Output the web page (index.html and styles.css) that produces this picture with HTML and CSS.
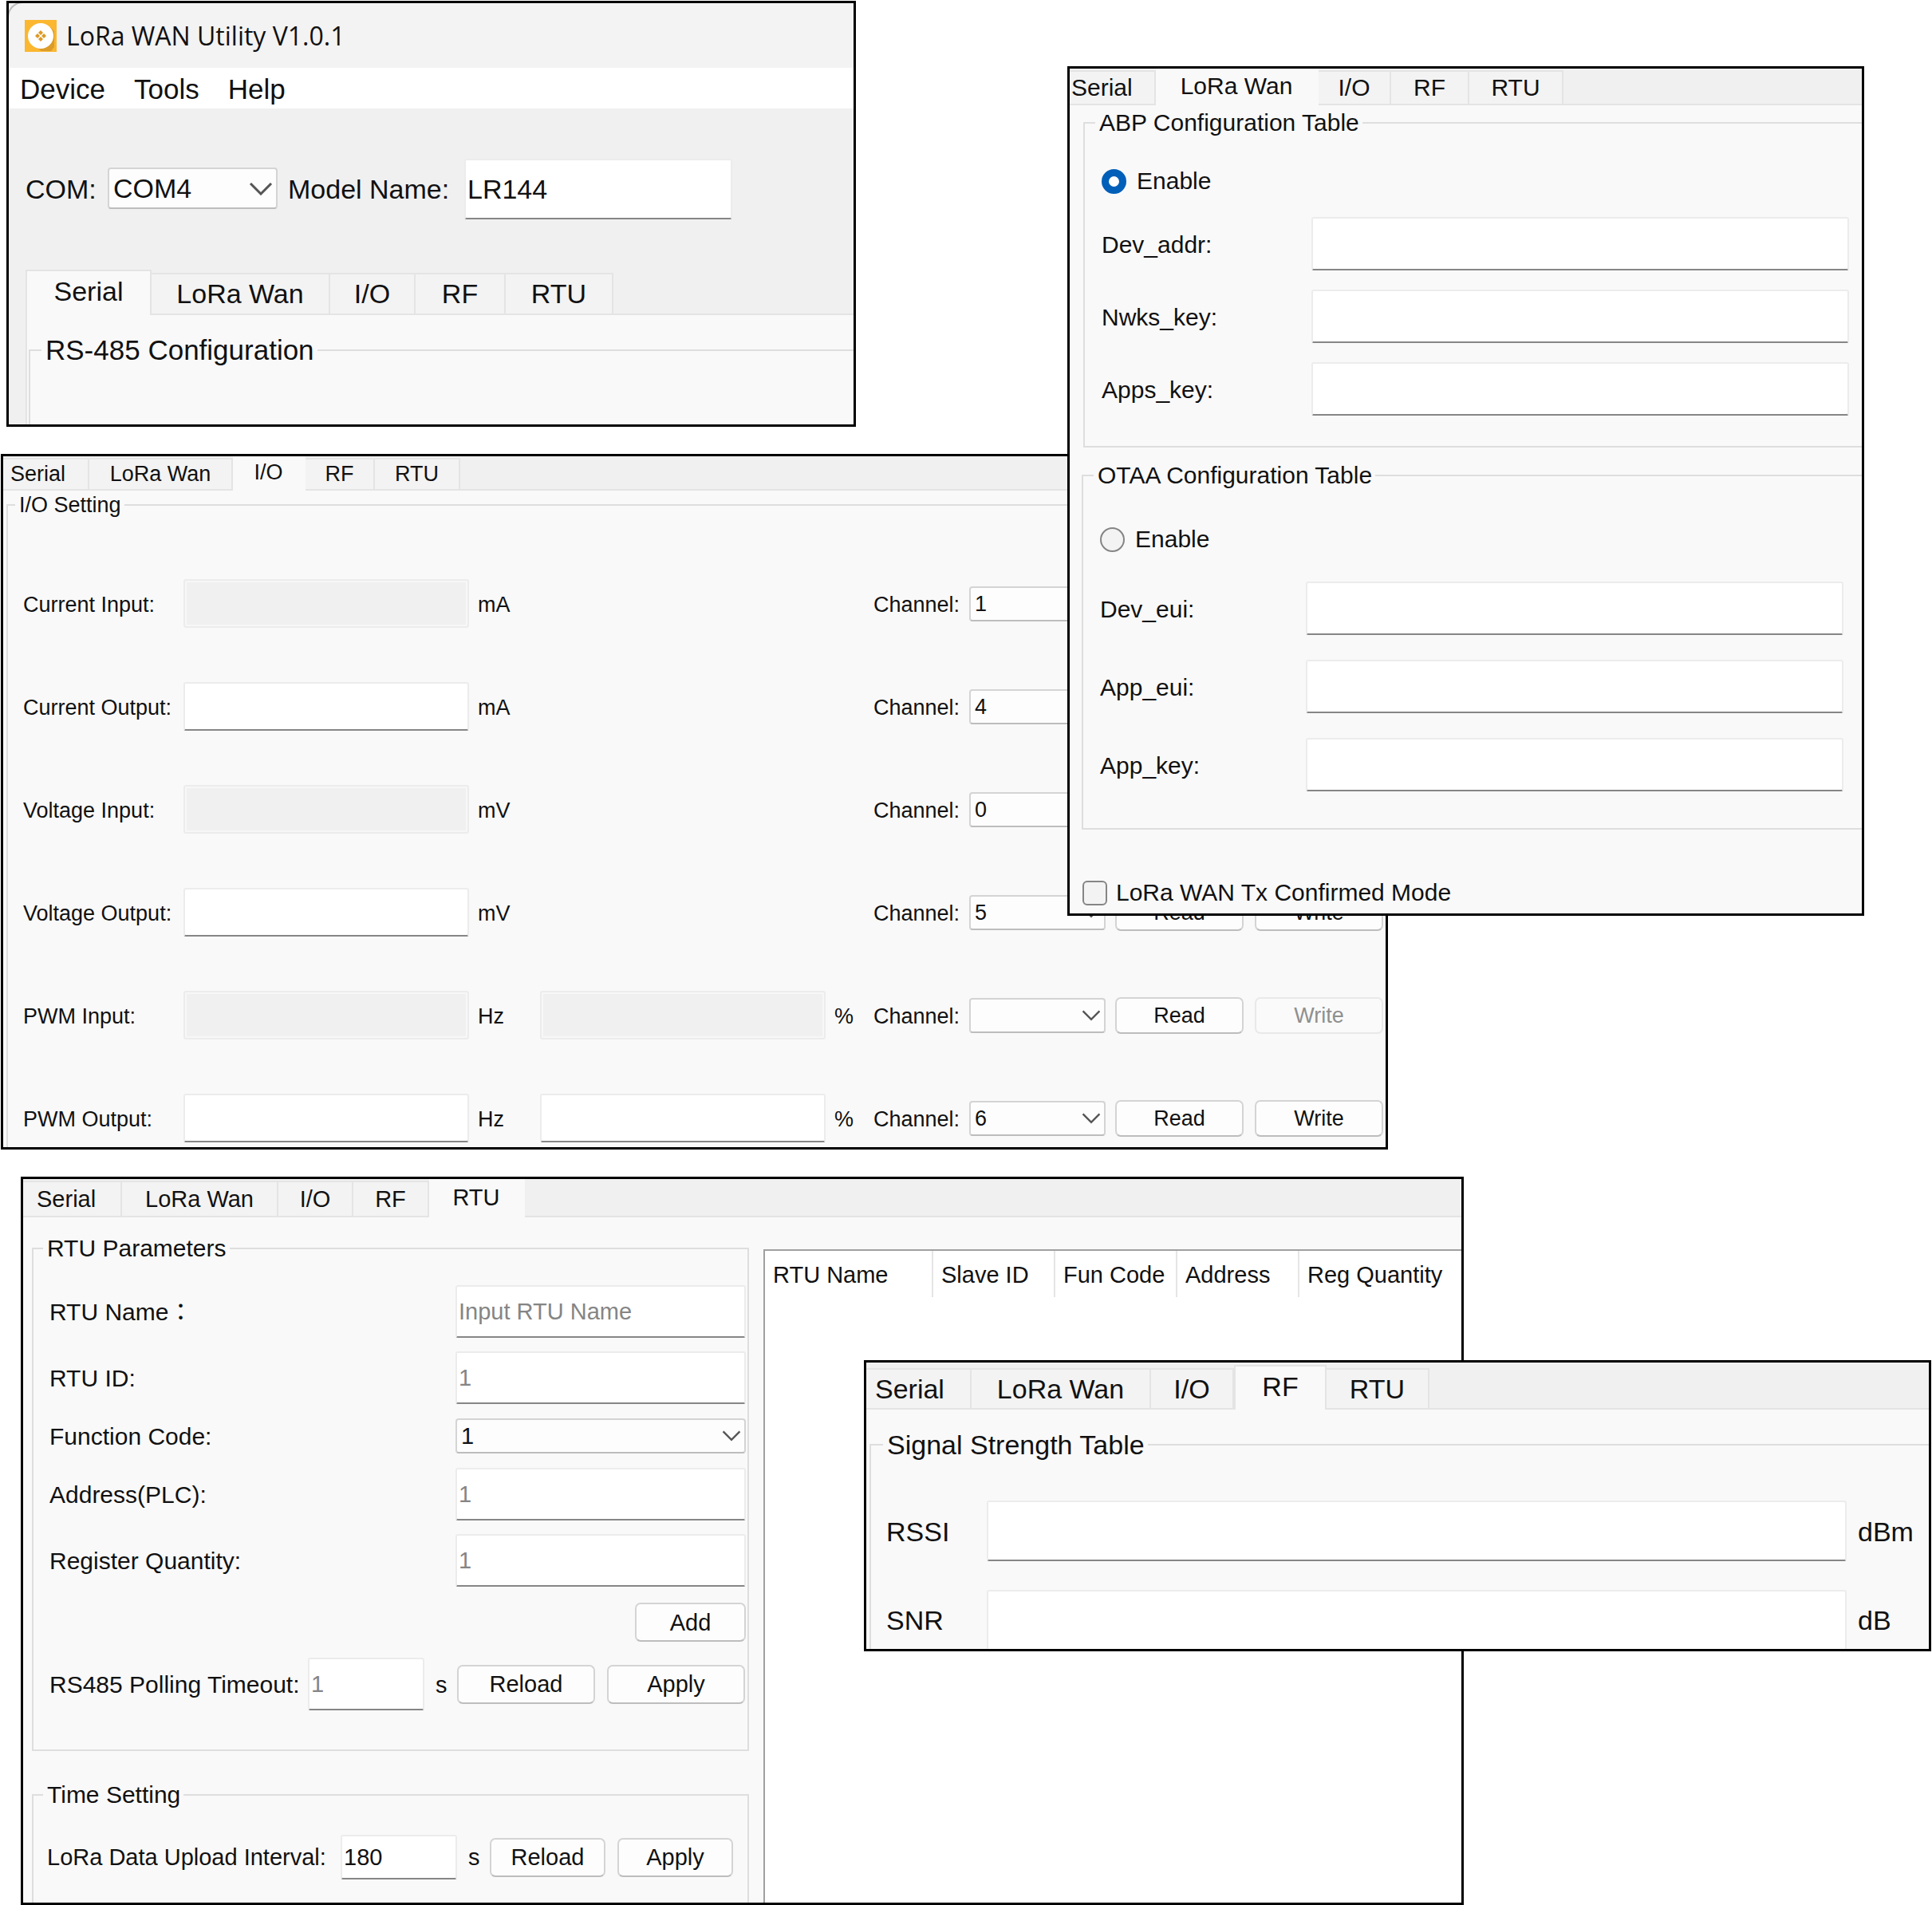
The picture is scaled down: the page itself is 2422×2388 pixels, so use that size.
FILE: index.html
```html
<!DOCTYPE html>
<html lang="en">
<head>
<meta charset="utf-8">
<title>LoRa WAN Utility V1.0.1</title>
<link rel="stylesheet" href="styles.css">
</head>
<body>
<main class="desktop">

  <section class="window window-main">
    <header class="titlebar">
      <svg class="app-icon" viewBox="0 0 40 40" aria-hidden="true">
        <rect width="40" height="40" fill="#fbb72f"/>
        <path d="M32 9 37 14V34L33 39H21L9 31Z" fill="#dc9c2a"/>
        <circle cx="20" cy="20" r="16" fill="#fff"/>
        <g fill="#dd9a26">
          <path d="M20 13l3 3-3 3-3-3z"/>
          <path d="M20 21l3 3-3 3-3-3z"/>
          <path d="M16 17l3 3-3 3-3-3z"/>
          <path d="M24 17l3 3-3 3-3-3z"/>
        </g>
      </svg>
      <h1 class="title">LoRa WAN Utility V1.0.1</h1>
    </header>
    <nav class="menubar">
      <button class="menu" type="button">Device</button>
      <button class="menu" type="button">Tools</button>
      <button class="menu" type="button">Help</button>
    </nav>
    <div class="toolbar">
      <label for="com">COM:</label>
      <span class="combo">
        <select id="com"><option>COM4</option></select>
        <svg class="chevron" viewBox="0 0 30 16" aria-hidden="true"><path d="M2 1l13 13L28 1"/></svg>
      </span>
      <label for="model">Model Name:</label>
      <input class="field" id="model" type="text" value="LR144">
    </div>
    <div class="tabs" role="tablist">
      <button class="tab active" role="tab" aria-selected="true" type="button">Serial</button>
      <button class="tab" role="tab" type="button">LoRa Wan</button>
      <button class="tab" role="tab" type="button">I/O</button>
      <button class="tab" role="tab" type="button">RF</button>
      <button class="tab" role="tab" type="button">RTU</button>
      <span class="tab-rest"></span>
    </div>
    <div class="pane">
      <fieldset class="group">
        <legend>RS-485 Configuration</legend>
      </fieldset>
    </div>
  </section>

  <section class="window window-io">
    <div class="tabs" role="tablist">
      <button class="tab cut" role="tab" type="button">Serial</button>
      <button class="tab" role="tab" type="button">LoRa Wan</button>
      <button class="tab active" role="tab" aria-selected="true" type="button">I/O</button>
      <button class="tab" role="tab" type="button">RF</button>
      <button class="tab" role="tab" type="button">RTU</button>
      <span class="tab-rest"></span>
    </div>
    <fieldset class="group">
      <legend>I/O Setting</legend>
      <div class="rows">
        <div class="io-row">
          <label for="cur-in">Current Input:</label>
          <input class="field" id="cur-in" type="text" disabled>
          <span class="unit">mA</span>
          <label class="channel" for="ch1">Channel:</label>
          <span class="combo">
            <select id="ch1"><option>1</option></select>
            <svg class="chevron" viewBox="0 0 30 16" aria-hidden="true"><path d="M2 1l13 13L28 1"/></svg>
          </span>
        </div>
        <div class="io-row">
          <label for="cur-out">Current Output:</label>
          <input class="field" id="cur-out" type="text">
          <span class="unit">mA</span>
          <label class="channel" for="ch2">Channel:</label>
          <span class="combo">
            <select id="ch2"><option>4</option></select>
            <svg class="chevron" viewBox="0 0 30 16" aria-hidden="true"><path d="M2 1l13 13L28 1"/></svg>
          </span>
        </div>
        <div class="io-row">
          <label for="vol-in">Voltage Input:</label>
          <input class="field" id="vol-in" type="text" disabled>
          <span class="unit">mV</span>
          <label class="channel" for="ch3">Channel:</label>
          <span class="combo">
            <select id="ch3"><option>0</option></select>
            <svg class="chevron" viewBox="0 0 30 16" aria-hidden="true"><path d="M2 1l13 13L28 1"/></svg>
          </span>
        </div>
        <div class="io-row">
          <label for="vol-out">Voltage Output:</label>
          <input class="field" id="vol-out" type="text">
          <span class="unit">mV</span>
          <label class="channel" for="ch4">Channel:</label>
          <span class="combo">
            <select id="ch4"><option>5</option></select>
            <svg class="chevron" viewBox="0 0 30 16" aria-hidden="true"><path d="M2 1l13 13L28 1"/></svg>
          </span>
          <button class="button" type="button">Read</button>
          <button class="button" type="button">Write</button>
        </div>
        <div class="io-row">
          <label for="pwm-in">PWM Input:</label>
          <input class="field" id="pwm-in" type="text" disabled>
          <span class="unit">Hz</span>
          <input class="field" type="text" aria-label="PWM input duty" disabled>
          <span class="unit">%</span>
          <label class="channel" for="ch5">Channel:</label>
          <span class="combo">
            <select id="ch5"><option></option></select>
            <svg class="chevron" viewBox="0 0 30 16" aria-hidden="true"><path d="M2 1l13 13L28 1"/></svg>
          </span>
          <button class="button" type="button">Read</button>
          <button class="button" type="button" disabled>Write</button>
        </div>
        <div class="io-row">
          <label for="pwm-out">PWM Output:</label>
          <input class="field" id="pwm-out" type="text">
          <span class="unit">Hz</span>
          <input class="field" type="text" aria-label="PWM output duty">
          <span class="unit">%</span>
          <label class="channel" for="ch6">Channel:</label>
          <span class="combo">
            <select id="ch6"><option>6</option></select>
            <svg class="chevron" viewBox="0 0 30 16" aria-hidden="true"><path d="M2 1l13 13L28 1"/></svg>
          </span>
          <button class="button" type="button">Read</button>
          <button class="button" type="button">Write</button>
        </div>
      </div>
    </fieldset>
  </section>

  <section class="window window-lora">
    <div class="tabs" role="tablist">
      <button class="tab cut" role="tab" type="button">Serial</button>
      <button class="tab active" role="tab" aria-selected="true" type="button">LoRa Wan</button>
      <button class="tab" role="tab" type="button">I/O</button>
      <button class="tab" role="tab" type="button">RF</button>
      <button class="tab" role="tab" type="button">RTU</button>
      <span class="tab-rest"></span>
    </div>
    <fieldset class="group abp">
      <legend>ABP Configuration Table</legend>
      <label class="choice"><input type="radio" name="activation" checked>Enable</label>
      <div class="rows">
        <div class="key-row"><label for="dev-addr">Dev_addr:</label><input class="field" id="dev-addr" type="text"></div>
        <div class="key-row"><label for="nwks-key">Nwks_key:</label><input class="field" id="nwks-key" type="text"></div>
        <div class="key-row"><label for="apps-key">Apps_key:</label><input class="field" id="apps-key" type="text"></div>
      </div>
    </fieldset>
    <fieldset class="group otaa">
      <legend>OTAA Configuration Table</legend>
      <label class="choice"><input type="radio" name="activation">Enable</label>
      <div class="rows">
        <div class="key-row"><label for="dev-eui">Dev_eui:</label><input class="field" id="dev-eui" type="text"></div>
        <div class="key-row"><label for="app-eui">App_eui:</label><input class="field" id="app-eui" type="text"></div>
        <div class="key-row"><label for="app-key">App_key:</label><input class="field" id="app-key" type="text"></div>
      </div>
    </fieldset>
    <label class="choice confirm"><input type="checkbox">LoRa WAN Tx Confirmed Mode</label>
  </section>

  <section class="window window-rtu">
    <div class="tabs" role="tablist">
      <button class="tab cut" role="tab" type="button">Serial</button>
      <button class="tab" role="tab" type="button">LoRa Wan</button>
      <button class="tab" role="tab" type="button">I/O</button>
      <button class="tab" role="tab" type="button">RF</button>
      <button class="tab active" role="tab" aria-selected="true" type="button">RTU</button>
      <span class="tab-rest"></span>
    </div>
    <div class="split">
      <div class="forms">
        <fieldset class="group params">
          <legend>RTU Parameters</legend>
          <div class="rows">
            <div class="form-row"><label for="rtu-name">RTU Name：</label><input class="field" id="rtu-name" type="text" placeholder="Input RTU Name"></div>
            <div class="form-row"><label for="rtu-id">RTU ID:</label><input class="field" id="rtu-id" type="text" placeholder="1"></div>
            <div class="form-row short">
              <label for="fun-code">Function Code:</label>
              <span class="combo">
                <select id="fun-code"><option>1</option></select>
                <svg class="chevron" viewBox="0 0 30 16" aria-hidden="true"><path d="M2 1l13 13L28 1"/></svg>
              </span>
            </div>
            <div class="form-row"><label for="address">Address(PLC):</label><input class="field" id="address" type="text" placeholder="1"></div>
            <div class="form-row"><label for="quantity">Register Quantity:</label><input class="field" id="quantity" type="text" placeholder="1"></div>
            <div class="add-row"><button class="button" type="button">Add</button></div>
            <div class="timing-row polling">
              <label for="polling">RS485 Polling Timeout:</label>
              <input class="field" id="polling" type="text" placeholder="1">
              <span class="unit">s</span>
              <button class="button" type="button">Reload</button>
              <button class="button" type="button">Apply</button>
            </div>
          </div>
        </fieldset>
        <fieldset class="group timing">
          <legend>Time Setting</legend>
          <div class="timing-row upload">
            <label for="interval">LoRa Data Upload Interval:</label>
            <input class="field" id="interval" type="text" value="180">
            <span class="unit">s</span>
            <button class="button" type="button">Reload</button>
            <button class="button" type="button">Apply</button>
          </div>
        </fieldset>
      </div>
      <div class="list">
        <table>
          <colgroup><col class="col-name"><col class="col-mid"><col class="col-mid"><col class="col-mid"><col></colgroup>
          <thead>
            <tr><th scope="col">RTU Name</th><th scope="col">Slave ID</th><th scope="col">Fun Code</th><th scope="col">Address</th><th scope="col">Reg Quantity</th></tr>
          </thead>
          <tbody></tbody>
        </table>
      </div>
    </div>
  </section>

  <section class="window window-rf">
    <div class="tabs" role="tablist">
      <button class="tab cut" role="tab" type="button">Serial</button>
      <button class="tab" role="tab" type="button">LoRa Wan</button>
      <button class="tab" role="tab" type="button">I/O</button>
      <button class="tab active" role="tab" aria-selected="true" type="button">RF</button>
      <button class="tab" role="tab" type="button">RTU</button>
      <span class="tab-rest"></span>
    </div>
    <fieldset class="group">
      <legend>Signal Strength Table</legend>
      <div class="rows">
        <div class="signal-row"><label for="rssi">RSSI</label><input class="field" id="rssi" type="text"><span class="unit">dBm</span></div>
        <div class="signal-row"><label for="snr">SNR</label><input class="field open" id="snr" type="text"><span class="unit">dB</span></div>
      </div>
    </fieldset>
  </section>

</main>
</body>
</html>
```
FILE: styles.css
```css
:root {
  --page: #f9f9f9;
  --chrome: #f0f0f0;
  --tab: #f3f3f3;
  --line: #e4e4e4;
  --text: #111;
}

* { box-sizing: border-box; }

body {
  margin: 0;
  background: #fff;
  color: var(--text);
  font-family: "Liberation Sans", Arial, "Noto Sans CJK TC", sans-serif;
}

button, input, select {
  margin: 0;
  font: inherit;
  color: inherit;
}

/* Desktop and its freely placed windows */
.desktop {
  position: relative;
  min-height: 100vh;
  overflow: hidden;
}

.window {
  position: absolute;
  border: 3px solid #000;
  background: var(--page);
  line-height: 36px;
  overflow: hidden;
}

.window-main { left: 8px; right: 1349px; top: 1px; font-size: 34px; background: var(--chrome); }
.window-io   { left: 1px; right: 682px; top: 569px; font-size: 27px; }
.window-lora { left: 1338px; right: 85px; top: 83px; font-size: 30px; }
.window-rtu  { left: 26px; right: 587px; top: 1475px; font-size: 29px; }
.window-rf   { left: 1083px; right: 1px; top: 1705px; font-size: 34px; }

/* Tabs */
.tabs {
  display: grid;
  background: var(--chrome);
}

.tab, .tab-rest {
  border: 0 solid var(--line);
  border-bottom-width: 2px;
}

.tab {
  margin-top: 2px;
  padding: 0 0 1px;
  border-top-width: 2px;
  border-right-width: 2px;
  background: var(--tab);
  text-align: center;
  white-space: nowrap;
}

.tab.active {
  margin-top: 0;
  padding-bottom: 3px;
  border-color: var(--page);
  background: var(--page);
}

.tab.cut { text-align: left; }

.window-main .tabs {
  height: 57px;
  margin-left: 21px;
  grid-template-columns: 158px 224px 107px 113px 135px 1fr;
}
.window-io .tabs { height: 43px; grid-template-columns: 108px 180px 91px 87px 107px 1fr; }
.window-lora .tabs { height: 46px; grid-template-columns: 108px 204px 91px 98px 118px 1fr; }
.window-rtu .tabs { height: 48px; grid-template-columns: 124px 196px 94px 95px 120px 1fr; }
.window-rf .tabs { height: 59px; padding-top: 3px; grid-template-columns: 132px 225px 104px 116px 129px 1fr; }

.window-main .tab, .window-rf .tab { margin-top: 4px; }
.window-main .tab.active, .window-rf .tab.active {
  margin-top: 0;
  border-width: 2px 2px 0 2px;
  border-color: var(--line);
  padding-bottom: 5px;
}

.window-io .cut { padding-left: 9px; }
.window-lora .cut { padding-left: 2px; }
.window-rtu .cut { padding-left: 17px; }
.window-rf .cut { padding-left: 11px; }

/* Group boxes */
.group {
  min-width: 0;
  margin: 0;
  padding: 0;
  border: 2px solid #dedede;
  border-right: 0;
}

legend { padding: 0 4px 0 5px; }

.rows { display: grid; }

.rows label, .rows .unit { padding-top: 2px; }

/* Controls */
.field {
  width: 100%;
  min-width: 0;
  padding: 0 2px;
  border: 2px solid #ececec;
  border-bottom-color: #868686;
  border-radius: 3px;
  background: #fff;
}

.field::placeholder { color: #858585; opacity: 1; }

.field:disabled {
  border-color: #ececec;
  background: #f0f0f0;
  box-shadow: inset 0 0 0 2px #f7f7f7;
}

.field.open { border-bottom: 0; border-radius: 3px 3px 0 0; }

.combo { position: relative; display: block; }

.combo select {
  display: block;
  width: 100%;
  height: 100%;
  padding: 0 5px;
  appearance: none;
  border: 2px solid #d4d4d4;
  border-bottom-color: #bdbdbd;
  border-radius: 4px;
  background: #fdfdfd;
  opacity: 1;
}

.chevron {
  position: absolute;
  top: 50%;
  right: 6px;
  width: 24px;
  height: 14px;
  margin-top: -7px;
  fill: none;
  stroke: #555;
  stroke-width: 3;
  pointer-events: none;
}

.button {
  padding: 0;
  border: 2px solid #d4d4d4;
  border-bottom-color: #bdbdbd;
  border-radius: 7px;
  background: #fdfdfd;
  text-align: center;
}

.button:disabled {
  border-color: #e9e9e9;
  background: #fafafa;
  color: #8f8f8f;
}

.choice {
  display: flex;
  align-items: center;
  gap: 13px;
}

.choice input {
  flex: none;
  width: 31px;
  height: 31px;
  appearance: none;
  border: 2px solid #858585;
  background: #f3f3f3;
}

.choice input[type="radio"] { border-radius: 50%; }
.choice input[type="checkbox"] { border-radius: 6px; }
.choice input[type="radio"]:checked { border: 9px solid #005fb8; background: #fff; }

/* Main window */
.titlebar {
  display: flex;
  align-items: center;
  gap: 12px;
  height: 81px;
  padding-left: 20px;
  border-top-left-radius: 18px;
  background: #f3f3f3;
  box-shadow: 0 0 0 2px #bbb;
}

.app-icon { width: 40px; height: 40px; }

.title {
  margin: 0;
  font: 400 32px/40px "Open Sans", "Noto Sans", sans-serif;
}

.menubar {
  display: flex;
  align-items: center;
  gap: 36px;
  height: 51px;
  padding: 2px 0 0 14px;
  background: #fff;
  font-size: 35px;
}

.menu { padding: 0; border: 0; background: none; }

.toolbar {
  display: grid;
  grid-template-columns: 103px 226px 221px 336px;
  align-items: center;
  padding: 63px 0 63px 21px;
}

.toolbar .field { height: 76px; }
.toolbar .combo { width: 213px; height: 52px; margin-bottom: 3px; }
.toolbar .chevron { width: 30px; height: 16px; }

.pane {
  margin-left: 21px;
  padding: 26px 0 0 2px;
  border-left: 2px solid var(--line);
  background: var(--page);
}

.window-main .group {
  height: 111px;
  padding-left: 14px;
  border-bottom: 0;
  font-size: 35px;
}

/* I/O window */
.window-io .group {
  margin-left: 4px;
  padding-left: 9px;
  border-bottom: 0;
}

.window-io .rows {
  gap: 68px;
  padding: 75px 0 6px 10px;
}

.io-row {
  display: grid;
  grid-template-columns: 201px 1fr 89px 1fr 60px 120px 183px 175px 164px;
  align-items: center;
}

.io-row .field { height: 61px; }
.io-row .unit { padding-left: 11px; }
.io-row .channel { grid-column: 6; }
.io-row .combo { width: 171px; height: 44px; }
.io-row .button { width: 161px; height: 46px; }

/* LoRa Wan window */
.abp {
  --label: 263px;
  margin: 4px 0 0 17px;
  padding: 37px 16px 38px 13px;
}

.otaa {
  --label: 258px;
  margin: 17px 0 0 15px;
  padding: 44px 23px 46px 13px;
}

.abp .choice, .otaa .choice, .window-lora .rows { margin-left: 8px; }
.abp .rows { gap: 24px; margin-top: 27px; }
.otaa .rows { gap: 31px; margin-top: 35px; }

.key-row {
  display: grid;
  grid-template-columns: var(--label) 1fr;
  align-items: center;
}

.key-row .field { height: 67px; }

.confirm {
  gap: 11px;
  margin: 61px 0 8px 16px;
}

/* RTU window */
.split {
  display: grid;
  grid-template-columns: 928px 1fr;
}

.forms { padding: 21px 18px 0 11px; }

.forms .group {
  padding: 0 2px 0 12px;
  border-right: 2px solid #dedede;
}

.params legend, .timing legend, .params label { font-size: 30px; }

.params .rows {
  gap: 17px;
  padding: 28px 0 49px 8px;
}

.form-row {
  display: grid;
  grid-template-columns: 509px 1fr;
  align-items: center;
}

.form-row.short { height: 46px; }
.form-row .field, .polling .field { height: 66px; }
.form-row .combo { height: 44px; }

.add-row {
  display: flex;
  align-items: center;
  justify-content: flex-end;
  height: 55px;
}

.add-row .button { width: 139px; height: 49px; }

.timing-row {
  display: grid;
  align-items: center;
}

.timing-row .field { width: 146px; }
.timing-row .button { height: 49px; }
.timing-row .unit { padding-left: 14px; }
.timing-row .button:last-child { margin-left: 15px; }

.polling { grid-template-columns: 324px 146px 41px 173px 188px; }
.upload {
  grid-template-columns: 368px 146px 41px 145px 160px;
  padding: 32px 0 29px 5px;
}
.upload .field { height: 56px; }

.forms .timing {
  margin-top: 37px;
  border-bottom: 0;
}

.list {
  margin-top: 40px;
  border: 2px solid #a0a0a0;
  border-right: 0;
  border-bottom: 0;
  background: #fff;
}

.list table {
  width: 100%;
  border-collapse: collapse;
  table-layout: fixed;
}

.col-name { width: 210px; }
.col-mid { width: 153px; }

.list th {
  height: 58px;
  padding: 2px 0 0 10px;
  border-right: 2px solid #e5e5e5;
  font-weight: 400;
  text-align: left;
  white-space: nowrap;
}

.list th:last-child { border-right: 0; }

/* RF window */
.window-rf .group {
  margin: 26px 0 0 4px;
  padding-left: 15px;
  border-bottom: 0;
}

.window-rf .rows {
  gap: 36px;
  padding: 52px 0 0 4px;
}

.signal-row {
  display: grid;
  grid-template-columns: 126px 1fr 103px;
  align-items: center;
}

.signal-row .field { height: 76px; }
.signal-row .open { height: 74px; }
.signal-row .unit { padding-left: 14px; }
```
